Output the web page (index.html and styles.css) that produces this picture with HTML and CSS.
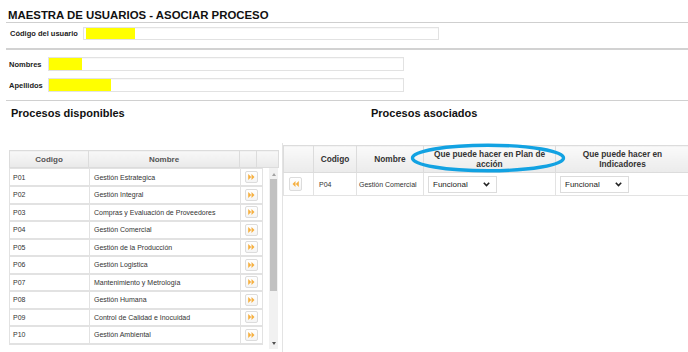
FILE: index.html
```html
<!DOCTYPE html>
<html lang="es">
<head>
    <meta charset="UTF-8">
    <meta name="viewport" content="width=device-width, initial-scale=1.0">
    <title>Maestra de usuarios - Asociar proceso</title>
    <link rel="stylesheet" href="styles.css">
</head>
<body>
    <div class="page">
        <h1 class="title">MAESTRA DE USUARIOS - ASOCIAR PROCESO</h1>

        <!-- Usuario -->
        <div class="user-row">
            <label class="field-label user-label">Código del usuario</label>
            <div class="input"><span class="mark mark-code"></span></div>
        </div>

        <div class="names">
            <div class="name-row">
                <label class="field-label name-label">Nombres</label>
                <div class="input input-tall"><span class="mark mark-first"></span></div>
            </div>
            <div class="name-row">
                <label class="field-label name-label">Apellidos</label>
                <div class="input input-tall"><span class="mark mark-last"></span></div>
            </div>
        </div>

        <div class="panels">
            <!-- Procesos disponibles -->
            <section class="available">
                <h2 class="panel-title">Procesos disponibles</h2>
                <table class="grid-head">
                    <colgroup>
                        <col class="c-code"><col class="c-name"><col class="c-btn"><col class="c-scroll">
                    </colgroup>
                    <thead>
                        <tr><th>Codigo</th><th>Nombre</th><th></th><th></th></tr>
                    </thead>
                </table>
                <div class="grid-body">
                    <table class="grid">
                        <colgroup>
                            <col class="b-code"><col class="b-name"><col class="b-btn">
                        </colgroup>
                        <tbody id="availableList"></tbody>
                    </table>
                    <div class="scrollbar">
                        <span class="scroll-arrow up"></span>
                        <span class="scroll-thumb"></span>
                        <span class="scroll-arrow down"></span>
                    </div>
                </div>
            </section>

            <!-- Procesos asociados -->
            <section class="associated">
                <h2 class="panel-title assoc-title">Procesos asociados</h2>
                <div class="assoc-box">
                    <table class="assoc">
                        <colgroup>
                            <col class="a-btn"><col class="a-code"><col class="a-name"><col class="a-plan"><col class="a-ind">
                        </colgroup>
                        <thead>
                            <tr>
                                <th></th>
                                <th>Codigo</th>
                                <th>Nombre</th>
                                <th>Que puede hacer en Plan de acción</th>
                                <th>Que puede hacer en Indicadores</th>
                            </tr>
                        </thead>
                        <tbody>
                            <tr>
                                <td>
                                    <button class="move-btn back">
                                        <svg width="7" height="6" viewBox="0 0 7 6"><path d="M3.5 0 L0.5 3 L3.5 6 Z M6.8 0 L3.8 3 L6.8 6 Z"/></svg>
                                    </button>
                                </td>
                                <td class="a-code-cell">P04</td>
                                <td class="a-name-cell">Gestión Comercial</td>
                                <td><div class="select">Funcional<svg width="7" height="5" viewBox="0 0 7 5"><path d="M0.8 0.8 L3.5 3.6 L6.2 0.8" /></svg></div></td>
                                <td><div class="select">Funcional<svg width="7" height="5" viewBox="0 0 7 5"><path d="M0.8 0.8 L3.5 3.6 L6.2 0.8" /></svg></div></td>
                            </tr>
                        </tbody>
                    </table>
                    <!-- marca sobre la columna del plan de accion -->
                    <svg class="highlight" width="156" height="30" viewBox="0 0 156 30">
                        <ellipse cx="78" cy="15" rx="75.5" ry="12.8" />
                    </svg>
                </div>
            </section>
        </div>
    </div>

    <script>
        const processes = [
            ['P01', 'Gestión Estrategica'],
            ['P02', 'Gestión Integral'],
            ['P03', 'Compras y Evaluación de Proveedores'],
            ['P04', 'Gestión Comercial'],
            ['P05', 'Gestión de la Producción'],
            ['P06', 'Gestión Logistica'],
            ['P07', 'Mantenimiento y Metrología'],
            ['P08', 'Gestión Humana'],
            ['P09', 'Control de Calidad e Inocuidad'],
            ['P10', 'Gestión Ambiental']
        ];

        // Fill the available processes list
        document.getElementById('availableList').innerHTML = processes.map(p => `
            <tr>
                <td class="code-cell">${p[0]}</td>
                <td class="name-cell">${p[1]}</td>
                <td class="btn-cell">
                    <button class="move-btn">
                        <svg width="7" height="6" viewBox="0 0 7 6"><path d="M0.2 0 L3.2 3 L0.2 6 Z M3.5 0 L6.5 3 L3.5 6 Z"/></svg>
                    </button>
                </td>
            </tr>
        `).join('');
    </script>
</body>
</html>
```

FILE: styles.css
```css
/* Basic styling */
body { margin: 0; font-family: "Liberation Sans", Arial, sans-serif; color: #222; background: #fff; }
.page { padding-left: 6px; height: 352px; overflow: hidden; }

.title { margin: 0; padding: 8px 0 0 2px; font-size: 11.4px; line-height: 14px; font-weight: bold; color: #111; border-bottom: 1px solid #cfcfcf; }

/* Form rows */
.user-row { display: flex; align-items: center; padding: 4px 0 8px 4px; border-bottom: 2px solid #d2d2d2; }
.names { display: flex; flex-direction: column; gap: 7px; padding: 7px 0 8px 3px; border-bottom: 1px solid #d0d0d0; }
.name-row { display: flex; align-items: center; }
.field-label { font-size: 7.5px; font-weight: bold; color: #222; }
.user-label { width: 73px; }
.name-label { width: 39px; }
.input { width: 356px; height: 13px; box-sizing: border-box; border: 1px solid #e2e2e2; background: #fff; box-shadow: inset 0 1px 1px rgba(0,0,0,0.03); display: flex; }
.input-tall { height: 14px; }
.mark { display: block; height: 100%; background: #ffff00; }
.mark-code { width: 49px; margin-left: 2px; }
.mark-first { width: 33px; }
.mark-last { width: 62px; }

/* Panels */
.panels { display: flex; }
.panel-title { margin: 0; padding-top: 6px; font-size: 11px; line-height: 13px; font-weight: bold; color: #111; }
.available { width: 269px; margin-left: 3px; }
.available .panel-title { padding-left: 2px; margin-bottom: 30px; }

.grid-head { width: 269px; table-layout: fixed; border-collapse: collapse; }
.c-code { width: 79px; } .c-name { width: 151px; } .c-btn { width: 17px; } .c-scroll { width: 22px; }
.grid-head th { height: 16px; padding: 0; border: 1px solid #dcdcdc; background: linear-gradient(#f8f8f8, #e9e9e9); font-size: 8px; font-weight: bold; color: #555; text-align: center; }

.grid-body { display: flex; height: 181px; overflow: hidden; }
.grid { width: 253px; table-layout: fixed; border-collapse: collapse; align-self: flex-start; }
.b-code { width: 80px; } .b-name { width: 151px; } .b-btn { width: 22px; }
.grid tr { height: 17.5px; }
.grid td { padding: 0; border: 1px solid #e2e2e2; border-bottom-width: 2px; font-size: 7px; color: #333; white-space: nowrap; overflow: hidden; }
.code-cell { padding-left: 3px !important; }
.name-cell { padding-left: 4px !important; }
.btn-cell { text-align: center; }

.move-btn { width: 13px; height: 12px; padding: 0; border: 1px solid #dcdcdc; border-radius: 2px; background: linear-gradient(#fff, #f4f4f4); display: inline-flex; align-items: center; justify-content: center; vertical-align: middle; }
.move-btn svg { fill: #f6b040; }
.move-btn.back { width: 13px; height: 14px; }

.scrollbar { width: 10px; margin-left: 6px; background: #f1f1f1; display: flex; flex-direction: column; align-items: center; }
.scroll-arrow { width: 0; height: 0; border-left: 2.5px solid transparent; border-right: 2.5px solid transparent; }
.scroll-arrow.up { margin-top: 5px; border-bottom: 3px solid #a3a3a3; }
.scroll-arrow.down { margin-top: auto; margin-bottom: 4px; border-top: 3px solid #505050; }
.scroll-thumb { width: 7px; height: 112px; margin-top: 3px; background: #c1c1c1; }

/* Procesos asociados */
.associated { flex: 1; margin-left: 4px; }
.assoc-title { padding-left: 89px; margin-bottom: 23px; }
.assoc-box { position: relative; height: 209px; border-left: 1px solid #e3e3e3; padding-top: 2px; }
.assoc { width: 406px; table-layout: fixed; border-collapse: collapse; }
.a-btn { width: 30px; } .a-code { width: 43px; } .a-name { width: 67px; } .a-plan { width: 132px; } .a-ind { width: 134px; }
.assoc th { height: 26px; padding: 0 6px; border: 1px solid #dcdcdc; background: linear-gradient(#fafafa, #ebebeb); font-size: 8.3px; line-height: 10px; font-weight: bold; color: #333; text-align: center; }
.assoc td { height: 22px; padding: 0; border: 1px solid #e3e3e3; font-size: 7px; color: #333; white-space: nowrap; }
.assoc td:first-child { padding-left: 5px; }
.a-code-cell { padding-left: 5px !important; }
.a-name-cell { padding-left: 2px !important; }

.select { width: 69px; height: 17px; box-sizing: border-box; margin-left: 4px; padding: 0 6px 0 4px; border: 1px solid #dcdcdc; background: #fff; display: flex; align-items: center; justify-content: space-between; font-size: 8px; color: #222; }
.select svg { fill: none; stroke: #222; stroke-width: 1.6; }

.highlight { position: absolute; left: 127px; top: 0; }
.highlight ellipse { fill: none; stroke: #12a2e2; stroke-width: 3.4; }
```
